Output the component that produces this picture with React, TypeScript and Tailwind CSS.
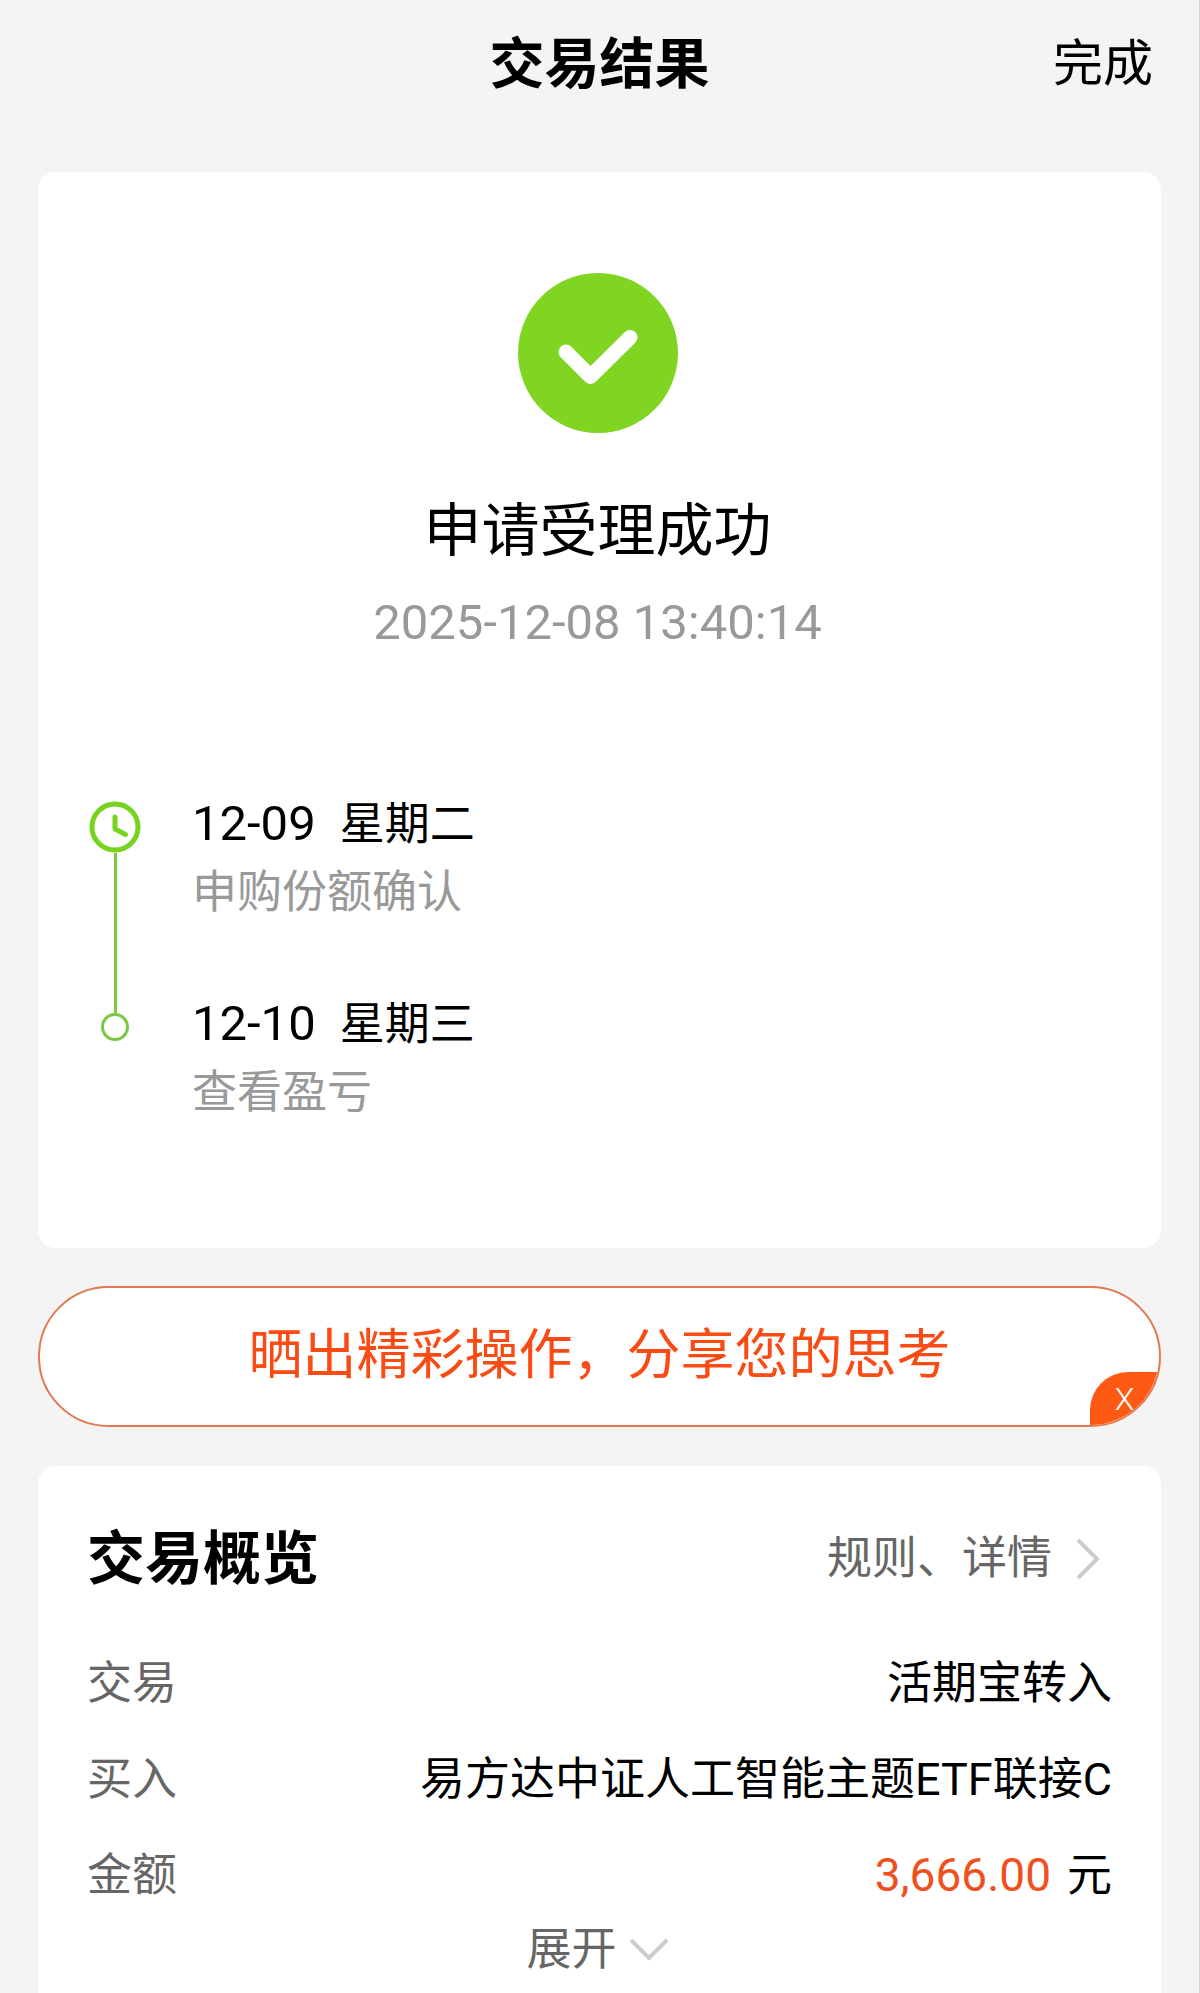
import * as React from "react";

const steps = [
  { date: "12-09", day: "星期二", desc: "申购份额确认" },
  { date: "12-10", day: "星期三", desc: "查看盈亏" },
];

function SuccessIcon() {
  return (
    <svg viewBox="0 0 160 160" className="size-40" fill="none" aria-hidden>
      <circle cx="80" cy="80" r="80" fill="#7fd521" />
      <path
        d="M48 79 L72.5 103.5 L112 64.5"
        stroke="#fff"
        strokeWidth="15"
        strokeLinecap="round"
        strokeLinejoin="round"
      />
    </svg>
  );
}

function ClockIcon() {
  return (
    <svg viewBox="0 0 52 52" className="size-[52px] shrink-0" fill="none" stroke="#78d220" aria-hidden>
      <circle cx="26" cy="26" r="23" strokeWidth="5" />
      <path d="M26 16 V28 L36.5 33.5" strokeWidth="5" strokeLinecap="round" strokeLinejoin="round" />
    </svg>
  );
}

function Timeline() {
  return (
    <ol className="mt-[135px] px-[51px]">
      {steps.map((s, idx) => (
        <li key={s.date} className="flex gap-[51px]">
          <div className="flex w-[52px] shrink-0 flex-col items-center">
            {idx === 0 ? (
              <>
                <div className="h-[11px]" />
                <ClockIcon />
                <div className="w-[3px] flex-1 bg-[#7ac943]" />
              </>
            ) : (
              <>
                <div className="h-[23px] w-[3px] bg-[#7ac943]" />
                <div className="size-7 rounded-full border-3 border-[#7ac943]" />
              </>
            )}
          </div>
          <div className={idx === 0 ? "pb-[63px]" : ""}>
            <p className="flex items-baseline gap-6 text-[45px] leading-[68px]">
              <span className="text-[49px] leading-[68px]">{s.date}</span>
              <span>{s.day}</span>
            </p>
            <p className="text-[45px] leading-[68px] text-[#999]">{s.desc}</p>
          </div>
        </li>
      ))}
    </ol>
  );
}

function Row({ label, children }: { label: string; children: React.ReactNode }) {
  return (
    <div className="flex h-24 items-center justify-between text-[45px] leading-[68px]">
      <dt className="text-[#666]">{label}</dt>
      <dd>{children}</dd>
    </div>
  );
}

export default function App() {
  return (
    <div className="flex min-h-screen flex-col border-r border-[#d4d4d4] bg-[#f4f4f4] px-[38px] font-[Roboto,'Noto_Sans_CJK_SC',sans-serif] text-black">
      <header className="mb-11 grid h-32 grid-cols-[1fr_auto_1fr] items-center">
        <h1 className="col-start-2 text-[55px] leading-[80px] font-bold">交易结果</h1>
        <button type="button" className="mr-2 justify-self-end text-[50px] leading-[80px]">
          完成
        </button>
      </header>

      <main className="flex flex-1 flex-col">
        <section className="rounded-[18px] bg-white pt-[101px] pb-[121px]">
          <div className="flex flex-col items-center pr-1">
            <SuccessIcon />
            <h2 className="mt-[58px] text-[58px] leading-[80px]">申请受理成功</h2>
            <time className="mt-5 text-[49px] leading-[64px] text-[#999]">2025-12-08 13:40:14</time>
          </div>
          <Timeline />
        </section>

        <div className="relative mt-[38px] overflow-hidden rounded-full border-2 border-[#e07a52] bg-white">
          <a href="#share" className="block pt-7 pb-[29px] text-center text-[54px] leading-[80px] text-[#fa4b14]">
            晒出精彩操作，分享您的思考
          </a>
          <button
            type="button"
            aria-label="关闭"
            className="absolute right-0 bottom-0 h-[53px] w-[69px] rounded-tl-[38px] bg-[#ff5a14] text-[32px] leading-[48px] font-light text-white"
          >
            X
          </button>
        </div>

        <section className="mt-[39px] flex-1 rounded-t-[18px] bg-white px-[49px] pt-[53px] pb-3">
          <div className="mb-[37px] flex items-center justify-between">
            <h2 className="text-[58px] leading-[80px] font-bold">交易概览</h2>
            <a href="#detail" className="mr-3 flex items-center gap-6 text-[45px] leading-[68px] text-[#666]">
              规则、详情
              <svg viewBox="0 0 24 42" className="h-[42px] w-6" fill="none" stroke="#ccc" strokeWidth="4" aria-hidden>
                <path d="M2 2 L21 21 L2 40" />
              </svg>
            </a>
          </div>
          <dl>
            <Row label="交易">活期宝转入</Row>
            <Row label="买入">易方达中证人工智能主题ETF联接C</Row>
            <Row label="金额">
              <span className="mr-4 text-[46px] leading-none text-[#f0501e]">3,666.00</span>元
            </Row>
          </dl>
          <div className="flex justify-center pr-1">
            <button type="button" className="flex h-[52px] items-center gap-3 text-[45px] leading-[52px] text-[#666]">
              展开
              <svg viewBox="0 0 40 24" className="h-6 w-10" fill="none" stroke="#ccc" strokeWidth="4" aria-hidden>
                <path d="M2 2 L20 20 L38 2" />
              </svg>
            </button>
          </div>
        </section>
      </main>
    </div>
  );
}
